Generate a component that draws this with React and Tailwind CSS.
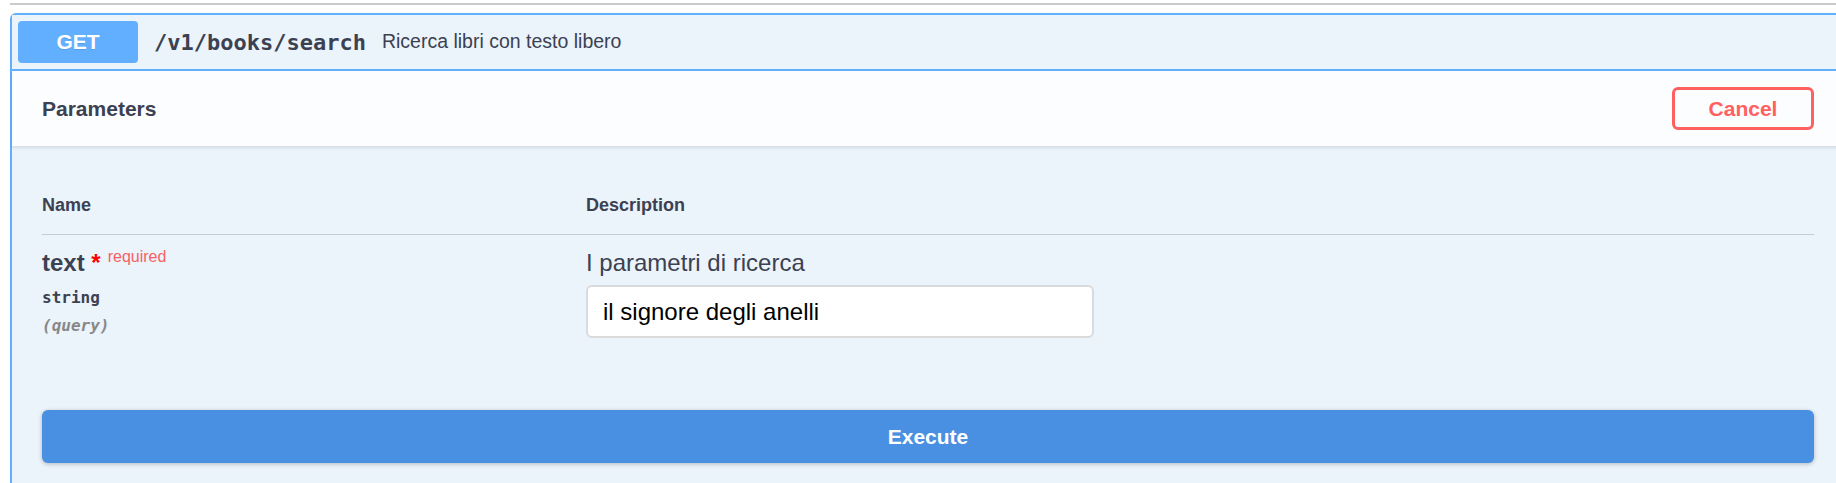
import React, { useState } from 'react';

const SANS = "font-['Liberation_Sans',Arial,sans-serif]";
const MONO = "font-['DejaVu_Sans_Mono',monospace]";

function Summary() {
  return (
    <div className="flex items-center px-[6px] py-[6px] border-b-2 border-[#61affe] bg-[#ebf3fb]">
      <div className="w-[120px] h-[42px] shrink-0 flex items-center justify-center rounded-[4px] bg-[#61affe] text-white text-[21px] font-bold [text-shadow:0_1px_0_rgba(0,0,0,0.1)]">
        GET
      </div>
      <span className={`${MONO} pl-[16px] pr-[16px] text-[22px] font-bold text-[#3b4151]`}>/v1/books/search</span>
      <span className="text-[19.5px] text-[#3b4151]">Ricerca libri con testo libero</span>
    </div>
  );
}

function ParamRow({ value, setValue }) {
  return (
    <div className="flex pt-[15px] pb-[15px]">
      {/* name column */}
      <div className="w-[544px] shrink-0">
        <div className="leading-[26px] text-[24px] font-bold text-[#3b4151] whitespace-nowrap">
          text<span className="text-[#ff0000]">&nbsp;*</span>
          <span className="relative top-[-9px] px-[7px] text-[16px] font-normal text-[#f76164]">required</span>
        </div>
        <div className={`${MONO} pt-[10px] leading-[18px] text-[16px] font-bold text-[#3b4151]`}>string</div>
        <div className={`${MONO} pt-[10px] leading-[18px] text-[16px] italic font-bold text-[#888888]`}>(query)</div>
      </div>
      {/* description column */}
      <div className="flex-1">
        <p className="leading-[26px] text-[24px] text-[#3b4151]">I parametri di ricerca</p>
        <input
          type="text"
          value={value}
          onChange={(e) => setValue(e.target.value)}
          className="mt-[9px] w-[508px] h-[53px] px-[15px] rounded-[6px] border-2 border-[#dadada] bg-white text-[24px] text-black outline-none"
        />
      </div>
    </div>
  );
}

export default function App() {
  const [value, setValue] = useState('il signore degli anelli');

  return (
    <div className={`${SANS} w-full h-[483px] overflow-hidden bg-white`}>
      <div className="mt-[3px] ml-[10px] h-[2px] bg-[#cbcbcb]" />

      <div className="mt-[8px] ml-[10px] w-[1836px] border-2 border-[#61affe] rounded-[6px] bg-[#ebf3fb]">
        <Summary />

        {/* Parameters header */}
        <div className="h-[75px] px-[30px] flex items-center justify-between bg-[#fcfdff] shadow-[0_2px_3px_rgba(0,0,0,0.1)]">
          <h4 className="text-[21px] font-bold text-[#3b4151]">Parameters</h4>
          <button className="w-[142px] h-[43px] rounded-[6px] border-[3px] border-[#ff6060] bg-transparent text-[21px] font-bold text-[#ff6060]">
            Cancel
          </button>
        </div>

        <div className="px-[30px] pt-[30px]">
          <div className="flex border-b border-[#c5ccd7] pt-[18px] pb-[18px] leading-[22px] text-[18px] font-bold text-[#3b4151]">
            <div className="w-[544px] shrink-0">Name</div>
            <div>Description</div>
          </div>
          <ParamRow value={value} setValue={setValue} />

          <div className="pt-[57px] pb-[30px]">
            <button className="w-full h-[53px] rounded-[6px] bg-[#4990e2] text-white text-[21px] font-bold shadow-[0_1px_4px_rgba(0,0,0,0.25)]">
              Execute
            </button>
          </div>
        </div>
      </div>
    </div>
  );
}
